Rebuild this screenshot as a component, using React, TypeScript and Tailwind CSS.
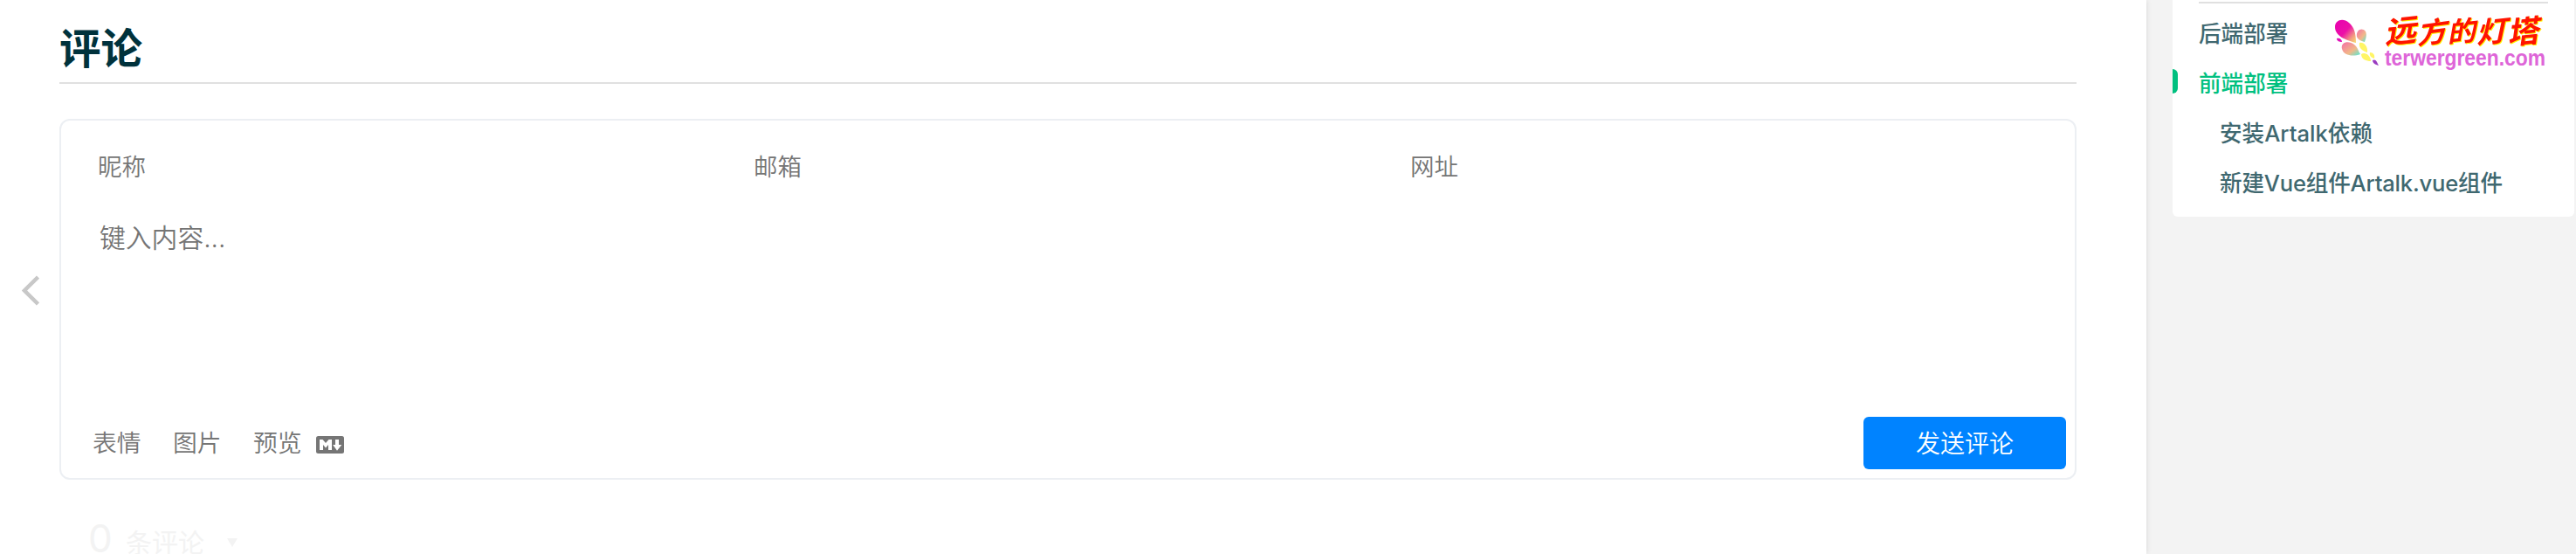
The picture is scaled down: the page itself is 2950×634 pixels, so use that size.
const cjk = "font-['Inter','Noto_Sans_CJK_SC',sans-serif]";

function MarkdownIcon() {
  return (
    <svg className="ml-[16px] mt-[3px] h-5 w-8" viewBox="0 0 32 20">
      <rect width="32" height="20" rx="2.5" fill="#757575" />
      <path d="M4 16V4h3.500L11 8l3.500-4H18v12h-4v-6l-3 3.500L8 10v6zM22 4h4v6h3.300L24 16.700 19.200 10H22z" fill="#fff" />
    </svg>
  );
}

const brush = [
  { ch: "远", x: 2731, y: 50, size: 36, t: "skewX(-10) skewY(-6)" },
  { ch: "方", x: 2768, y: 51, size: 33, t: "skewX(-12) skewY(-8)" },
  { ch: "的", x: 2803, y: 49, size: 32, t: "skewX(-10) skewY(-6)" },
  { ch: "灯", x: 2836, y: 50, size: 34, t: "skewX(-12) skewY(-6)" },
  { ch: "塔", x: 2872, y: 51, size: 36, t: "skewX(-8) skewY(-6)" },
];

function SiteLogo() {
  return (
    <svg className="absolute left-[2670px] top-0 h-[95px] w-[270px] overflow-visible" viewBox="2670 0 270 95">
      <defs>
        <linearGradient id="petalA" x1="0" y1="0" x2="1" y2="1">
          <stop offset="0" stopColor="#e800b0" />
          <stop offset=".5" stopColor="#ec10a8" />
          <stop offset=".8" stopColor="#f3a080" />
          <stop offset="1" stopColor="#f8e070" />
        </linearGradient>
        <linearGradient id="petalB" x1="0" y1="0" x2="1" y2="1">
          <stop offset="0" stopColor="#f36fa8" />
          <stop offset=".6" stopColor="#f2b888" />
          <stop offset="1" stopColor="#50ecd8" />
        </linearGradient>
      </defs>
      <path d="M2674 31C2674 23 2683 20 2690 26C2696 31 2698 38 2698 49C2686 46 2674 41 2674 31Z" fill="url(#petalA)" />
      <path d="M2699 42C2698 34 2705 31 2709 36C2711 40 2709 45 2708 48C2703 47 2700 45 2699 42Z" fill="url(#petalB)" />
      <path d="M2676 44C2679 43 2682 45 2682 48C2679 48 2676 47 2676 44Z" fill="#e010b8" />
      <path d="M2682 56C2680 48 2690 46 2696 51C2700 54 2701 59 2703 62C2695 65 2684 64 2682 56Z" fill="url(#petalB)" />
      <path d="M2702 49C2707 48 2712 53 2711 60C2705 58 2701 55 2702 49ZM2704 62C2709 59 2715 64 2715 70C2710 70 2704 68 2704 62ZM2714 60C2718 60 2720 63 2719 67C2716 66 2713 64 2714 60Z" fill="#fff566" />
      <path d="M2717 69C2721 67 2722 71 2724 75C2720 74 2717 72 2717 69Z" fill="#9a3cc0" />
      <g className="drop-shadow-[1.500px_1.500px_0_#fff200]" fontFamily="'Noto Sans CJK SC', sans-serif" fontWeight="700" fill="#ff1400">
        {brush.map((b) => (
          <text key={b.ch} transform={`translate(${b.x} ${b.y}) ${b.t}`} fontSize={b.size}>
            {b.ch}
          </text>
        ))}
      </g>
      <text x="2731" y="75" fontFamily="'Liberation Sans', sans-serif" fontWeight="700" fontSize="25.500" textLength="184" lengthAdjust="spacingAndGlyphs" fill="#de65d8">
        terwergreen.com
      </text>
    </svg>
  );
}

const toc = [
  { label: "后端部署", cls: "pl-[30px] text-[#3f6870]" },
  { label: "前端部署", cls: "pl-[30px] text-[#00c07f]" },
  { label: "安装Artalk依赖", cls: "pl-[54px] text-[#3f6870]" },
  { label: "新建Vue组件Artalk.vue组件", cls: "pl-[54px] tracking-[-0.2px] text-[#3f6870]" },
];

export default function App() {
  return (
    <div className={"relative flex h-[634px] w-[2950px] overflow-hidden bg-[#f3f3f3] " + cjk}>
      <main className="flex w-[2458px] shrink-0 bg-white shadow-[0_0_6px_rgba(0,0,0,0.12)]">
        <div className="flex w-[68px] items-center pl-[25px] pt-[31px]">
          <svg className="h-9 w-5" viewBox="0 0 20 36" fill="none" stroke="#c8c8c8" strokeWidth="4.500">
            <path d="M18.500 2 3 17.500l15.500 15.500" />
          </svg>
        </div>
        <div className="w-[2310px]">
          <h2 className="h-24 border-b-2 border-[#e0e0e0] pt-5 text-[47.5px] font-bold leading-[72px] text-[#00323c]">评论</h2>
          <section className="mt-10 flex h-[413px] flex-col rounded-xl border-2 border-[#eceff3]">
            <div className="grid h-[94px] grid-cols-[751px_752px_1fr] pl-[42px] pt-[33px] text-[27.5px] font-[350] leading-[40px] text-[#757575]">
              <span>昵称</span>
              <span>邮箱</span>
              <span>网址</span>
            </div>
            <div className="flex-1 pl-[44px] pt-[18px] text-[29.8px] font-[350] leading-[44px] text-[#757575]">键入内容...</div>
            <div className="flex h-20 items-start justify-between pr-[10px] pl-[36px]">
              <div className="flex items-center pt-[20px] text-[27.800px] font-[350] leading-[40px] text-[#757575]">
                <span className="w-[92px]">表情</span>
                <span className="w-[92px]">图片</span>
                <span>预览</span>
                <MarkdownIcon />
              </div>
              <button className="mt-[10px] h-[60px] w-[232px] rounded-md bg-[#0083ff] pt-px text-[28px] font-[350] text-white">发送评论</button>
            </div>
          </section>
          <div className="flex h-[85px] items-baseline pl-[33px] pt-[43px] text-[#f3f3f3]">
            <span className="w-[43px] text-[44px] leading-[48px]">0</span>
            <span className="text-[30px] leading-[44px]">条评论</span>
            <svg className="ml-[26px] h-[18px] w-3" viewBox="0 0 12 18">
              <path d="M0 2h12L6 12z" fill="#f3f3f3" />
            </svg>
          </div>
        </div>
      </main>
      <aside className="ml-[30px] h-[248px] w-[460px] rounded-b-md bg-white">
        <div className="mx-[30px] mt-[2px] h-[2px] bg-[#e0e0e0]" />
        <ul className="pt-[6px]">
          {toc.map((t, i) => (
            <li key={t.label} className={"relative h-[57px] whitespace-nowrap text-[25.6px] font-medium leading-[57px] " + t.cls}>
              {i === 1 && <span className="absolute left-0 top-[12px] h-7 w-[6px] rounded-r-md bg-[#00c07f]" />}
              {t.label}
            </li>
          ))}
        </ul>
      </aside>
      <SiteLogo />
    </div>
  );
}
